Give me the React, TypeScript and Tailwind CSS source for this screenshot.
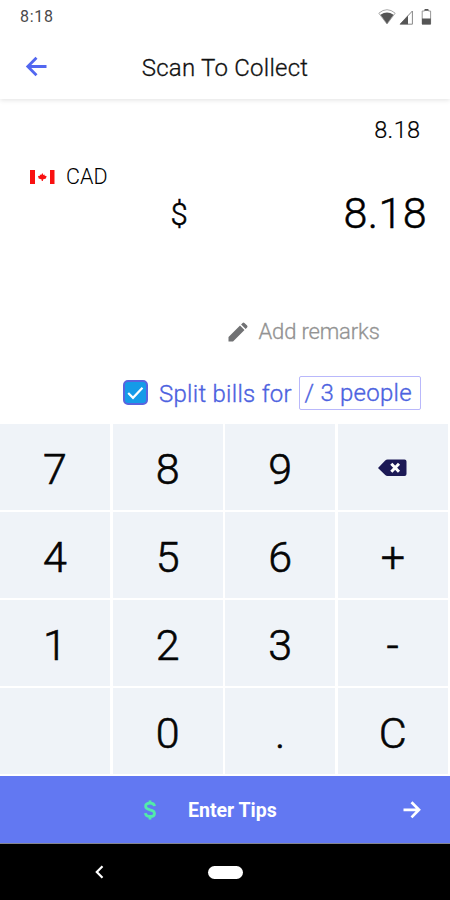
import React from "react";

const keys = ["7", "8", "9", "back", "4", "5", "6", "+", "1", "2", "3", "-", "", "0", ".", "C"];

function StatusBar() {
  return (
    <div className="flex h-9 items-start justify-between pl-[20px] pr-[18px]">
      <span className="mt-[8px] text-[16px] leading-[17px] tracking-[0.7px] text-[#4a4a4a]">8:18</span>
      <div className="mt-[9px] flex items-start">
        <svg width="18" height="16" viewBox="0 0 18 16">
          <path d="M0.8 4.2Q9-2.8 17.2 4.2L9 15Z" fill="#fff" stroke="#aaa" strokeWidth="1" />
          <path d="M2.5 5.8Q9 1.2 15.5 5.8L9 14.8Z" fill="#555" />
        </svg>
        <svg className="ml-[3px]" width="15" height="16" viewBox="0 0 15 16">
          <path d="M1 15.2L13.4 2V15.2Z" fill="#fff" stroke="#888" strokeWidth="1" />
          <path d="M1 15.2L9 6.6V15.2Z" fill="#555" />
        </svg>
        <svg className="ml-[7px]" width="11" height="16" viewBox="0 0 11 16">
          <path d="M3.5 2V0.8H7.5V2H9.6V15H1.2V2Z" fill="#fff" stroke="#999" strokeWidth="1" />
          <path d="M3.8 0H7.2V1.8H3.8ZM1 9.6H9.8V15.4H1Z" fill="#555" />
        </svg>
      </div>
    </div>
  );
}

function Flag() {
  return (
    <svg width="25" height="14" viewBox="0 0 25 14">
      <path d="M0 0H5V14H0ZM20 0H24.5V14H20Z" fill="#f91111" />
      <path d="M12.3 3L13.4 5L14.7 4.6L14.6 5.8L16.6 6.1L15.9 8.4L12.9 9.6V11H11.7V9.6L8.7 8.4L8 6.1L10 5.8L9.9 4.6L11.2 5Z" fill="#f91111" />
    </svg>
  );
}

function Backspace() {
  return (
    <svg className="-mt-[2px]" width="29" height="18" viewBox="0 0 29 18">
      <path d="M0 9L7.2 1.5Q8.2 0.5 9.6 0.5H26.5Q28.5 0.5 28.5 2.5V15Q28.5 17 26.5 17H9.6Q8.2 17 7.2 16Z" fill="#1c1956" />
      <path d="M13.3 4.7L21 12.7M21 4.7L13.3 12.7" stroke="#fff" strokeWidth="3" />
    </svg>
  );
}

export default function App() {
  return (
    <div className="flex h-[900px] w-[450px] flex-col overflow-hidden bg-white font-[Roboto,sans-serif] text-black">
      <header className="h-[99px] shrink-0 shadow-[0_1px_5px_rgba(0,0,0,0.12)]">
        <StatusBar />
        <div className="grid h-[63px] grid-cols-[60px_330px_60px] items-center">
          <svg className="-mt-[1px] ml-[24px]" width="23" height="22" viewBox="0 0 23 22" fill="none" stroke="#5267f0" strokeWidth="2.8">
            <path d="M12.5 1.8L3.8 10.5L12.5 19.2M3.8 10.5H22.5" />
          </svg>
          <h1 className="text-center text-[24px] font-light leading-[28px] tracking-[0.25px] text-[#111] [-webkit-text-stroke:0.3px]">Scan To Collect</h1>
        </div>
      </header>

      <main className="flex h-[325px] shrink-0 flex-col">
        <div className="mt-[17px] pr-[29.5px] text-right text-[23.5px] font-light leading-[28px] tracking-[0.4px] [-webkit-text-stroke:0.2px]">8.18</div>
        <div className="mt-[20px] flex h-[26px] items-center pl-[30px] font-light">
          <Flag />
          <span className="ml-[11px] text-[21.5px] leading-[26px]">CAD</span>
        </div>
        <div className="-mt-[2px] flex h-[50px] items-center justify-between pl-[170.5px] pr-[23px] font-light [-webkit-text-stroke:0.5px]">
          <span className="pt-[4px] text-[31px] leading-[50px]">$</span>
          <span className="text-[43px] leading-[50px] tracking-[0.4px]">8.18</span>
        </div>
        <div className="mt-[79px] flex h-[30px] items-center pl-[228px]">
          <svg width="20" height="20" viewBox="0 0 20 20" fill="#717274">
            <path d="M0.5 19.5V15L12 3.5L16.5 8L5 19.5ZM13.1 2.4L14.6 0.9Q15.5 0 16.4 0.9L19.1 3.6Q20 4.5 19.1 5.4L17.6 6.9Z" />
          </svg>
          <span className="ml-[10.5px] text-[22px] font-light leading-[30px] tracking-[-0.15px] text-[#939393] [-webkit-text-stroke:0.3px]">Add remarks</span>
        </div>
        <div className="mt-[28px] flex h-[35px] items-center pl-[123px] text-[24px] font-light text-[#4c62e0]">
          <span className="flex h-[25px] w-[25px] items-center justify-center rounded-[5px] border-2 border-[#5964df] bg-[#159be8]">
            <svg width="17" height="14" viewBox="0 0 17 14" fill="none" stroke="#fff" strokeWidth="2.2">
              <path d="M1.2 7L6 11.8L15.5 1.8" />
            </svg>
          </span>
          <span className="ml-[11px] w-[139.5px] whitespace-nowrap pt-[2px] leading-[34px] tracking-[0.27px] [-webkit-text-stroke:0.35px]">Split bills for</span>
          <span className="h-[34px] w-[122px] whitespace-nowrap rounded-[2px] border-[1.5px] border-[#b9b8fb] pl-[5px] leading-[33px] tracking-[0.25px] [-webkit-text-stroke:0.35px]">/ 3 people</span>
        </div>
      </main>

      <div className="grid h-[352px] shrink-0 grid-cols-[repeat(4,110px)] grid-rows-[repeat(4,86px)] gap-x-[2.6px] gap-y-[2px]">
        {keys.map((key, i) => (
          <button key={i} className="flex items-center justify-center bg-[#eff3f8] pt-[3px] text-[43px] font-light leading-[50px] text-[#050505] [-webkit-text-stroke:0.6px]">
            {key === "back" ? <Backspace /> : key}
          </button>
        ))}
      </div>

      <div className="flex h-[68px] shrink-0 items-center border-b border-[#85858d] bg-[#6278f2] pl-[144px] text-white">
        <svg width="12" height="20" viewBox="0 0 12 20" fill="none" stroke="#52eba9" strokeWidth="2.8">
          <path d="M10.5 6.2Q10.2 3.2 6 3.2Q1.6 3.2 1.6 6.3Q1.6 8.8 6 9.8Q10.5 10.8 10.5 13.4Q10.5 16.5 6 16.5Q1.7 16.5 1.4 13.2M6 0.5V4M6 16V19.5" />
        </svg>
        <span className="ml-[32px] w-[215px] pt-[2px] text-[19.5px] font-bold leading-[24px]">Enter Tips</span>
        <svg width="18" height="18" viewBox="0 0 18 18" fill="none" stroke="#fff" strokeWidth="2.7">
          <path d="M0.5 8.8H16M8.5 1.2L16 8.8L8.5 16.4" />
        </svg>
      </div>

      <div className="flex h-[56px] shrink-0 items-center bg-black pl-[95px]">
        <svg width="9" height="14" viewBox="0 0 9 14" fill="none" stroke="#fff" strokeWidth="2.2">
          <path d="M7.5 1.2L1.8 7L7.5 12.8" />
        </svg>
        <span className="ml-[104px] h-[13px] w-[35px] rounded-full bg-white" />
      </div>
    </div>
  );
}
